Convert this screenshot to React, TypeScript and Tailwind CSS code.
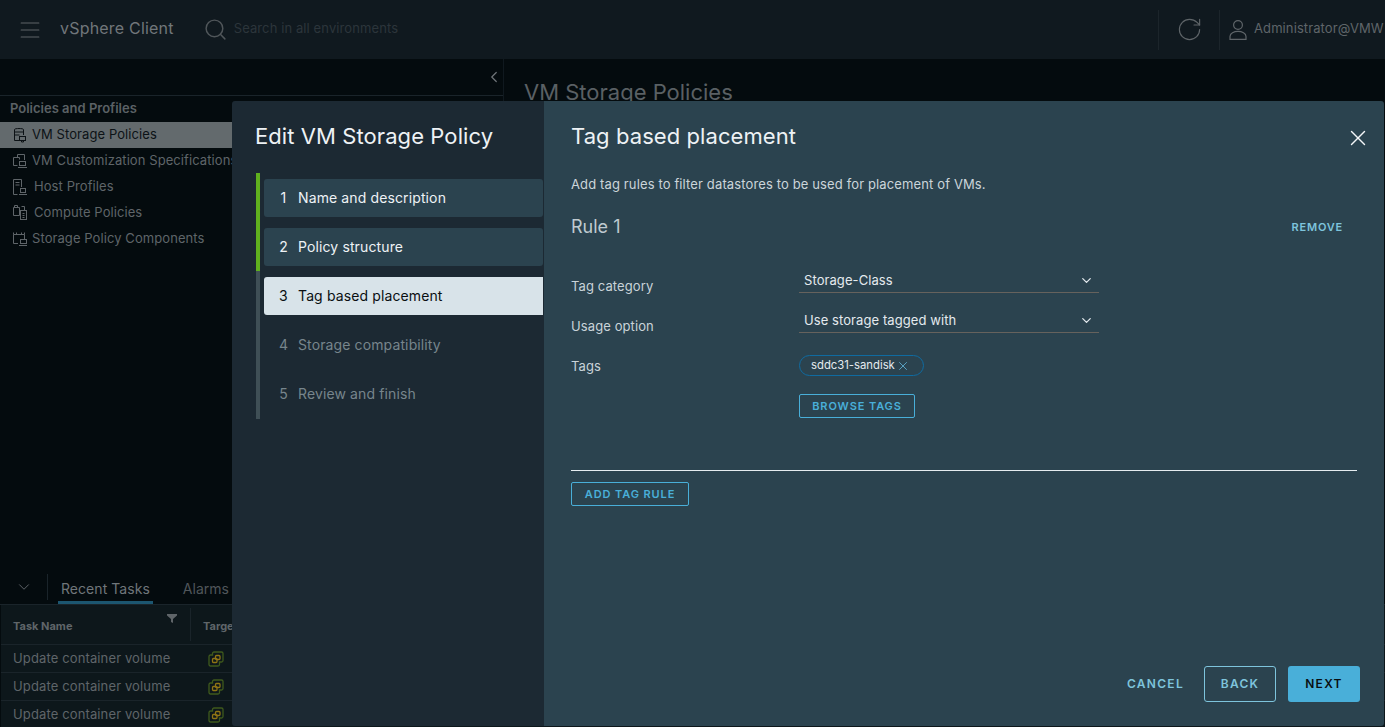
import { ChevronDown, ChevronLeft, Menu, RotateCw, Search, X } from "lucide-react";

const font = "font-['Inter','Liberation_Sans',sans-serif]";

function PolicyIcon({ kind }: { kind: number }) {
    return (
        <svg width="16" height="16" viewBox="0 0 16 16" fill="none" stroke="currentColor" strokeWidth="1" className="shrink-0">
            {kind === 0 && (
                <>
                    <path d="M2.5 2.5c0-1.300 9-1.300 9 0V8M2.500 2.500V13.500H7M2.500 5h9M2.500 8h5" />
                    <rect x="7.500" y="9.500" width="6" height="4" />
                    <path d="M9.500 13.500v1.500h2v-1.500" />
                </>
            )}
            {kind === 1 && (
                <>
                    <path d="M5.500 4V1.500h7V7M1.500 4.500h6v2M1.500 4.500v8h4" />
                    <rect x="7.500" y="8.500" width="6" height="4" />
                    <path d="M6 14.500h9" />
                </>
            )}
            {kind === 2 && (
                <>
                    <path d="M9.500 8V.500h-8v15h4M3.500 3.500h4M3.500 6h4" />
                    <rect x="8.500" y="9.500" width="5" height="4" />
                    <path d="M7 15.500h8" />
                </>
            )}
            {kind === 3 && (
                <>
                    <path d="M2.500 2.500V.500h3v2M1.500 2.500h6v8h-6zM9.500 1.500h3v4" />
                    <rect x="8.500" y="5.500" width="6" height="9" />
                    <path d="M10.500 8.500h2M10.500 10.500h2M10.500 12.500h2" />
                </>
            )}
            {kind === 4 && (
                <>
                    <path d="M1.500 12.500v-9h11V8M1.500 3.500V1.500M4.500 3.500V1.500M9.500 3.500V1.500M12.500 3.500V1.500M1.500 12.500H6" />
                    <rect x="8.500" y="8.500" width="6" height="4" />
                    <path d="M7 14.500h8" />
                </>
            )}
        </svg>
    );
}

function VmIcon() {
    return (
        <svg width="16" height="16" viewBox="0 0 16 16" fill="none" className="shrink-0">
            <path d="M1 5.500a1.500 1.500 0 0 1 1.500-1.500h2V2.500A1.500 1.500 0 0 1 6 1h7.500A1.500 1.500 0 0 1 15 2.500v7a1.500 1.500 0 0 1-1.500 1.500h-2v2.500a1.500 1.500 0 0 1-1.500 1.500H2.500A1.500 1.500 0 0 1 1 13.500z" stroke="#3f5a1c" strokeWidth="1.300" />
            <rect x="4.500" y="7.500" width="4.500" height="4" rx="1" stroke="#8f7414" strokeWidth="1.300" />
            <rect x="7.500" y="4.500" width="4.500" height="4" rx="1" stroke="#8f7414" strokeWidth="1.300" />
        </svg>
    );
}

const policies = [
    { label: "VM Storage Policies", gap: "gap-[4px]", active: true },
    { label: "VM Customization Specifications", gap: "gap-[4px]" },
    { label: "Host Profiles", gap: "gap-[6px]" },
    { label: "Compute Policies", gap: "gap-[6px]" },
    { label: "Storage Policy Components", gap: "gap-[4px]" },
];

const steps = [
    { n: 1, label: "Name and description", state: "done" },
    { n: 2, label: "Policy structure", state: "done" },
    { n: 3, label: "Tag based placement", state: "current" },
    { n: 4, label: "Storage compatibility", state: "todo" },
    { n: 5, label: "Review and finish", state: "todo" },
];

function Field({ label, value }: { label: string; value: string }) {
    return (
        <div className="flex h-[40px] items-start">
            <div className="w-[228px] pt-[10px] text-[13px] leading-[20px] tracking-[0.1px] text-[#c9d3d9]">{label}</div>
            <div className="flex h-[27px] w-[300px] items-center justify-between border-b border-[#66625d] pl-[5px] pr-[5px] pt-[3px] text-[13px] text-[#e4eaee]">
                <span className="tracking-[0.08px]">{value}</span>
                <ChevronDown size={15} strokeWidth={2} className="text-[#e4eaee]" />
            </div>
        </div>
    );
}

export default function App() {
    return (
        <div className={`${font} relative flex h-[727px] w-[1385px] flex-col overflow-hidden bg-[#040b0e] text-[13px]`}>
            {/* Header */}
            <header className="flex h-[59px] shrink-0 items-center bg-[#10191f] pl-[18px] text-[#5f6569]">
                <Menu size={24} strokeWidth={1.1} className="scale-x-[1.1]" />
                <span className="mb-[3px] ml-[18px] text-[16px] tracking-[0.2px] text-[#70767a]">vSphere Client</span>
                <Search size={25} strokeWidth={1.4} className="ml-[29px] text-[#50565a]" />
                <span className="mb-[2px] ml-[6px] text-[13px] tracking-[0.1px] text-[#2c353b]">Search in all environments</span>
                <div className="ml-auto flex h-[40px] items-center">
                    <div className="flex h-full w-[62px] items-center justify-center border-x border-[#1c252b]">
                        <RotateCw size={27} strokeWidth={1} />
                    </div>
                    <svg width="18" height="20" viewBox="0 0 18 20" fill="none" stroke="currentColor" strokeWidth="1.200" className="ml-[9px]">
                        <circle cx="9" cy="5" r="4.400" />
                        <path d="M1 19.400v-3c0-3 4-5 8-5s8 2 8 5v3z" />
                    </svg>
                    <span className="mb-[2px] ml-[7px] w-[131px] overflow-hidden whitespace-nowrap text-[13px] tracking-[0.1px] text-[#5f6569]">Administrator@VMW</span>
                </div>
            </header>

            {/* Main area behind the dialog */}
            <div className="flex min-h-0 flex-1">
                <aside className="w-[504px] shrink-0 border-r border-[#10191f]">
                    <div className="flex h-[37px] items-center justify-end border-b border-[#1a242a] text-[#70767a]">
                        <ChevronLeft size={18} strokeWidth={1.6} />
                    </div>
                    <div className="pl-[10px] pt-[4px] text-[13px] font-semibold leading-[16px] text-[#5b6165]">Policies and Profiles</div>
                    <div className="mt-[6px]">
                        {policies.map((p, i) => (
                            <div
                                key={p.label}
                                className={`flex h-[26px] items-center pl-[12px] ${p.gap} ${p.active ? "bg-[#636a6d] text-[#0c1216]" : "text-[#5f6569]"}`}
                            >
                                <PolicyIcon kind={i} />
                                <span className="whitespace-nowrap text-[13px] tracking-[0.08px]">{p.label}</span>
                            </div>
                        ))}
                    </div>
                </aside>
                <main className="pl-[20px] pt-[20px] text-[22px] leading-[26px] text-[#5a6064]">VM Storage Policies</main>
            </div>

            {/* Recent tasks */}
            <section className="h-[157px] shrink-0 bg-[#040b0e]">
                <div className="flex h-[35px] items-end border-b border-[#1a242a]">
                    <div className="flex h-[26px] w-[48px] items-center justify-center self-center border-r border-[#1a242a] text-[#5f6569]">
                        <ChevronDown size={18} strokeWidth={1.3} />
                    </div>
                    <div className="ml-[10px] border-b-[3px] border-[#1c5670] px-[3px] pb-[2px] text-[14px] leading-[20px] tracking-[0.05px] text-[#70767a]">Recent Tasks</div>
                    <div className="ml-[30px] pb-[5px] text-[14px] leading-[20px] text-[#50565a]">Alarms</div>
                </div>
                <div className="ml-[1px] bg-[#0d171b]">
                    <div className="flex h-[40px] items-center border-b border-[#1a242a] text-[11px] font-bold text-[#5f6569]">
                        <div className="relative flex h-[33px] w-[190px] items-center border-r border-[#1a242a] pl-[12px] pt-[4px]">
                            Task Name
                            <svg width="10" height="9" viewBox="0 0 10 9" fill="currentColor" className="absolute right-[13px] top-[6px]">
                                <path d="M0 0h10v1.500L6 5v4L4 8V5L0 1.500z" />
                            </svg>
                        </div>
                        <div className="pl-[12px] pt-[4px]">Target</div>
                    </div>
                    {[0, 1, 2].map((i) => (
                        <div key={i} className="flex h-[28px] items-center border-b border-[#1a242a] text-[13px] tracking-[0.13px] text-[#5f6569]">
                            <div className="w-[207px] pl-[12px]">Update container volume</div>
                            <VmIcon />
                        </div>
                    ))}
                </div>
            </section>

            {/* Dialog */}
            <div className="absolute left-[232px] top-[101px] flex h-[625px] w-[1152px] overflow-hidden rounded-[3px]">
                <div className="w-[312px] shrink-0 bg-[#1c2933] pl-[24px]">
                    <h2 className="-ml-[1px] mt-[22px] text-[22px] leading-[27px] tracking-[0.08px] text-[#eef2f5]">Edit VM Storage Policy</h2>
                    <div className="mt-[23px] flex">
                        <div className="flex w-[4px] flex-col">
                            <div className="h-[98px] bg-[#5fb01e]" />
                            <div className="h-[148px] bg-[#3f4f56]" />
                        </div>
                        <div className="ml-[4px] mr-[1px] flex flex-1 flex-col gap-[11px] pt-[6px]">
                            {steps.map((s) => (
                                <div
                                    key={s.n}
                                    className={`flex h-[38px] items-center rounded-l-[3px] pb-[2px] pl-[15px] text-[14px] tracking-[0.12px] ${
                                        s.state === "done"
                                            ? "rounded-r-[3px] bg-[#2b434f] text-[#eef2f5]"
                                            : s.state === "current"
                                              ? "bg-[#d8e3e9] text-[#0a0f12]"
                                              : "text-[#77858c]"
                                    }`}
                                >
                                    <span className="w-[19px] pr-[10px] text-center">{s.n}</span>
                                    <span>{s.label}</span>
                                </div>
                            ))}
                        </div>
                    </div>
                </div>

                <div className="flex flex-1 flex-col bg-[#2b434f] pl-[27px] pr-[27px]">
                    <div className="flex h-[50px] items-end justify-between">
                        <h1 className="text-[22px] leading-[30px] tracking-[0.08px] text-[#eef2f5]">Tag based placement</h1>
                        <X size={26} strokeWidth={1.300} className="mr-[-14px] text-[#f4f6f8]" />
                    </div>
                    <p className="mt-[23px] text-[13px] leading-[20px] tracking-[0.13px] text-[#cbd5da]">Add tag rules to filter datastores to be used for placement of VMs.</p>
                    <div className="mt-[20px] flex items-center justify-between">
                        <span className="text-[18px] leading-[26px] text-[#bfcad0]">Rule 1</span>
                        <button className="mr-[14px] text-[11px] font-semibold tracking-[0.8px] text-[#7ec4dc]">REMOVE</button>
                    </div>
                    <div className="mt-[26px]">
                        <Field label="Tag category" value="Storage-Class" />
                        <Field label="Usage option" value="Use storage tagged with" />
                        <div className="flex pt-[9px]">
                            <div className="w-[228px] pt-[1px] text-[13px] leading-[20px] tracking-[0.1px] text-[#c9d3d9]">Tags</div>
                            <div className="flex flex-col items-start">
                                <div className="flex h-[21px] w-[125px] items-center rounded-full border border-[#0f6ba1] pl-[11px] text-[11.3px] text-[#e4eaee]">
                                    sddc31-sandisk
                                    <X size={14} strokeWidth={1.400} className="ml-[1px] text-[#62b6dc]" />
                                </div>
                                <button className="mt-[18px] h-[24px] w-[116px] rounded-[2px] border border-[#49afd9] text-[11px] font-semibold tracking-[0.9px] text-[#49afd9]">BROWSE TAGS</button>
                            </div>
                        </div>
                    </div>
                    <div className="mt-[52px] h-px bg-[#e6edf0]" />
                    <div className="mt-[11px]">
                        <button className="h-[24px] w-[118px] rounded-[2px] border border-[#49afd9] text-[11px] font-semibold tracking-[0.9px] text-[#49afd9]">ADD TAG RULE</button>
                    </div>
                    <div className="mb-[24px] mr-[-3px] mt-auto flex items-center justify-end">
                        <button className="text-[12px] font-semibold tracking-[1.3px] text-[#7ec4dc]">CANCEL</button>
                        <button className="ml-[20px] h-[36px] w-[72px] rounded-[3px] border border-[#7ec4dc] text-[12px] font-semibold tracking-[1.3px] text-[#7ec4dc]">BACK</button>
                        <button className="ml-[12px] h-[36px] w-[72px] rounded-[3px] bg-[#49afd9] text-[12px] font-semibold tracking-[1.3px] text-[#0a0f12]">NEXT</button>
                    </div>
                </div>
            </div>
        </div>
    );
}
